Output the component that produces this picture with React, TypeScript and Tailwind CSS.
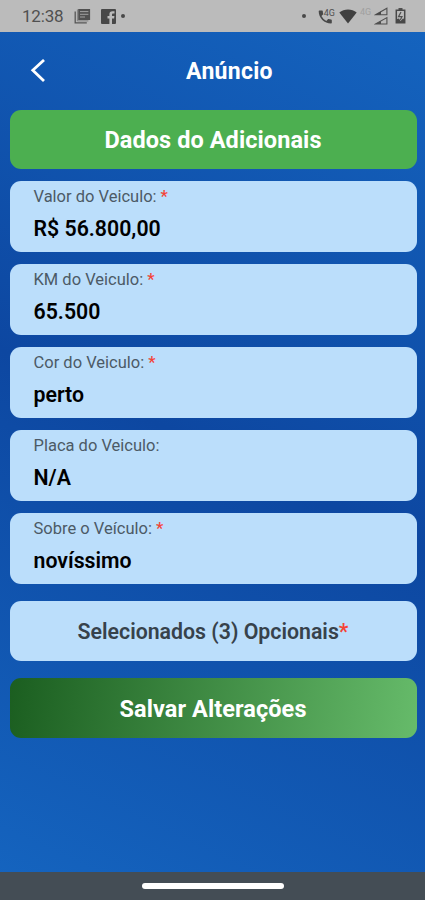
import React from 'react';

interface Field {
  label: string;
  value: string;
  required: boolean;
}

const FIELDS: Field[] = [
  { label: 'Valor do Veiculo:', value: 'R$ 56.800,00', required: true },
  { label: 'KM do Veiculo:', value: '65.500', required: true },
  { label: 'Cor do Veiculo:', value: 'perto', required: true },
  { label: 'Placa do Veiculo:', value: 'N/A', required: false },
  { label: 'Sobre o Veículo:', value: 'novíssimo', required: true },
];

const NewsIcon = () => (
  <svg width="17" height="16" viewBox="0 0 17 16" fill="none">
    <path d="M1.2 3.5v11.3h11.6" stroke="#565656" strokeWidth="1.3" />
    <path d="M3.4 1.5v11.4h11" stroke="#808080" strokeWidth="1" />
    <path d="M4.2 1h11.9v11H4.2z" fill="#505050" />
    <path d="M6 3.6h8.4M6 6.3h8.4M6 9h5" stroke="#a0a0a0" strokeWidth="1" />
  </svg>
);

const FacebookIcon = () => (
  <svg width="15" height="15" viewBox="0 0 15 15">
    <path d="M1 0h13a1 1 0 0 1 1 1v13a1 1 0 0 1-1 1h-3V9.4h2.1l.3-2.3H11V5.7c0-.8.3-1.2 1.2-1.2h1.3V2.3h-2c-2 0-3.1 1.1-3.1 3.1v1.7H6.5v2.3h1.9V15H1a1 1 0 0 1-1-1V1a1 1 0 0 1 1-1z" fill="#484848" />
  </svg>
);

const CallIcon = () => (
  <svg width="17" height="17" viewBox="0 0 17 17">
    <path d="M1.4 2.5h2.7c.4 0 .7.3.7.7 0 .9.1 1.7.4 2.5.1.3 0 .5-.2.7L3.4 8a11 11 0 0 0 4.900 4.900l1.600-1.600c.2-.2.5-.3.7-.2.8.3 1.600.4 2.500.4.4 0 .7.3.7.7v2.600c0 .4-.3.7-.7.7C6.300 15.500.7 9.900.7 3.200c0-.4.3-.7.7-.7z" fill="#484848" />
    <text x="5.8" y="8.3" fontSize="9" fontFamily="Roboto, sans-serif" fill="#505050">4G</text>
  </svg>
);

const WifiIcon = () => (
  <svg width="18" height="15" viewBox="0 0 18 15">
    <path d="M.3 3.600C2.800 1.500 5.800.5 9 .5s6.200 1 8.700 3.100L9 14.400z" fill="#404040" />
  </svg>
);

const SignalIcon = () => (
  <svg width="14" height="18" viewBox="0 0 14 18" fill="none">
    <path d="M1.5 7.7L12.9 1.3v6.4z" stroke="#505050" strokeWidth="1.1" />
    <path d="M1.5 7.7L7 4.6v3.1z" fill="#484848" />
    <path d="M1.5 17L12.9 10.6V17z" stroke="#505050" strokeWidth="1.1" />
    <path d="M1.5 17L7 13.9V17z" fill="#505050" />
  </svg>
);

const BatteryIcon = () => (
  <svg width="11" height="16" viewBox="0 0 11 16" fill="none">
    <path d="M3.5 0h4v2h-4z" fill="#505050" />
    <path d="M1.3 2.3h8.4v12.4H1.3z" stroke="#484848" strokeWidth="1.5" />
    <path d="M2 11l2-.5L5.5 13 8 10.500l1.300.5v3.500H2z" fill="#484848" />
    <path d="M6 4L3.500 8.600h3.500L5.300 12" stroke="#505050" strokeWidth="1.2" />
  </svg>
);

const StatusBar = () => (
  <div className="flex h-8 shrink-0 items-center bg-[#bbbbbb] pl-[22px] pr-[19px] text-[#505050]">
    <span className="w-[42px] text-[17px] leading-8 tracking-[-0.2px] whitespace-nowrap">12:38</span>
    <span className="ml-[10px]"><NewsIcon /></span>
    <span className="ml-[10px]"><FacebookIcon /></span>
    <span className="ml-[5px] size-1 rounded-full bg-[#484848]" />
    <span className="ml-auto size-1 rounded-full bg-[#484848]" />
    <span className="ml-[12px]"><CallIcon /></span>
    <span className="ml-[4px]"><WifiIcon /></span>
    <span className="ml-[3px] w-[13px] -translate-y-1 text-[9px] leading-none text-[#a0a0a0]">4G</span>
    <span className="ml-[1px]"><SignalIcon /></span>
    <span className="ml-[7px]"><BatteryIcon /></span>
  </div>
);

const FieldCard: React.FC<{ field: Field }> = ({ field }) => (
  <div className="h-[71px] rounded-[11px] bg-[#bbdefb] pl-6 pt-[5px]">
    <div className="text-[16.5px] leading-[22px] text-[#4c5a66]">
      {field.label}
      {field.required && <span className="ml-1 font-medium text-[#f44336]">*</span>}
    </div>
    <div className="mt-[7px] text-[21.3px] font-semibold leading-[28px] text-black">{field.value}</div>
  </div>
);

export default function App() {
  return (
    <div className="flex h-[900px] w-[425px] flex-col overflow-hidden bg-[linear-gradient(205.3deg,#1565c0,#0d47a1,#1565c0)] font-['Roboto',sans-serif]">
      <StatusBar />

      <header className="flex h-[78px] shrink-0 items-center pl-[30px]">
        <button aria-label="Voltar" className="w-4">
          <svg width="16" height="24" viewBox="0 0 16 24" fill="none">
            <path d="M14 1L2.8 11.2L14 22" stroke="#fff" strokeWidth="2.8" />
          </svg>
        </button>
        <h1 className="ml-[140px] pt-px text-[23px] font-bold leading-[28px] tracking-[0.3px] text-white">Anúncio</h1>
      </header>

      <main className="flex-1 pl-[9.5px] pr-[8.5px]">
        <div className="flex h-[59px] items-center justify-center rounded-[11px] bg-[#4caf50] pt-[3px] text-[23.5px] font-bold tracking-[0.08px] text-white">
          Dados do Adicionais
        </div>

        <div className="mt-3 flex flex-col gap-[11.9px]">
          {FIELDS.map((field) => (
            <FieldCard key={field.label} field={field} />
          ))}
        </div>

        <button className="mt-[17.5px] flex h-[59.5px] w-full items-center justify-center rounded-[11px] bg-[#bbdefb] pt-[3px] text-[21.3px] font-semibold text-[#37424b]">
          Selecionados (3) Opcionais<span className="text-[#f44336]">*</span>
        </button>

        <button className="mt-[17.5px] flex h-[59.5px] w-full items-center justify-center rounded-[11px] bg-[linear-gradient(98deg,#1b5e20,#66bb6a)] pt-[4px] text-[23.5px] font-bold tracking-[0.08px] text-white">
          Salvar Alterações
        </button>
      </main>

      {/* Gesture navigation bar */}
      <div className="flex h-7 shrink-0 items-center justify-center bg-[#444d55]">
        <div className="h-[6px] w-[142px] rounded-full bg-white" />
      </div>
    </div>
  );
}
